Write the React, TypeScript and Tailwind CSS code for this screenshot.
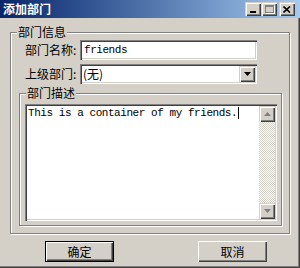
import { ReactNode } from "react";

const cjk = "font-['SimSun','Noto_Sans_CJK_SC',sans-serif]";
const mono = "font-['Liberation_Mono','Noto_Sans_CJK_SC',monospace]";

const sunken =
  "bg-white shadow-[inset_1px_1px_0_#808080,inset_2px_2px_0_#404040,inset_-1px_-1px_0_#fff,inset_-2px_-2px_0_#d4d0c8]";
const raised =
  "bg-[#d4d0c8] shadow-[inset_1px_1px_0_#d4d0c8,inset_2px_2px_0_#fff,inset_-1px_-1px_0_#404040,inset_-2px_-2px_0_#808080]";

function TitleButton({ children }: { children: ReactNode }) {
  return (
    <div className={`w-[16px] h-[14px] flex items-center justify-center ${raised}`}>
      {children}
    </div>
  );
}

function Arrow({ up, gray }: { up?: boolean; gray?: boolean }) {
  return (
    <svg width="7" height="4" viewBox="0 0 7 4" className={up ? "" : "rotate-180"}>
      <path d="M3.5 0 L7 4 L0 4 Z" fill={gray ? "#808080" : "#000"} />
    </svg>
  );
}

function Group({ label, className, children }: { label: string; className: string; children: ReactNode }) {
  return (
    <div className={`relative border border-[#808080] shadow-[inset_1px_1px_0_#fff,1px_1px_0_#fff] ${className}`}>
      <span className={`absolute -top-[8px] left-[6px] px-[1px] bg-[#d4d0c8] text-[12px] leading-[14px] ${cjk}`}>
        {label}
      </span>
      {children}
    </div>
  );
}

export default function App() {
  return (
    <div className="w-[300px] h-[268px] flex flex-col bg-[#d4d0c8] overflow-hidden text-black">
      <div className="h-[18px] shrink-0 flex items-center justify-between bg-linear-to-r from-[#0a246a] to-[#a6caf0] pl-[3px] pr-[5px]">
        <span className={`text-white font-bold text-[12px] leading-[14px] ${cjk}`}>添加部门</span>
        <div className="flex gap-[2px]">
          <div className="flex">
            <TitleButton>
              <div className="w-[6px] h-[2px] bg-black mt-[6px] -ml-[1px]" />
            </TitleButton>
            <TitleButton>
              <div className="w-[9px] h-[8px] border border-[#808080] border-t-2 shadow-[1px_1px_0_#fff]" />
            </TitleButton>
          </div>
          <TitleButton>
            <svg width="8" height="7" viewBox="0 0 8 7">
              <path d="M0.5 0.5 L7 6.5 M7 0.5 L0.5 6.5" stroke="#000" strokeWidth="1.6" />
            </svg>
          </TitleButton>
        </div>
      </div>

      <div className="flex-1 flex flex-col border-r border-b border-[#404040] shadow-[inset_-1px_-1px_0_#808080]">
        <Group label="部门信息" className="mt-[14px] ml-[10px] w-[280px] h-[202px] shrink-0">
          <div className="flex items-center mt-[7px] ml-[14px]">
            <span className={`w-[55px] text-[12px] ${cjk}`}>部门名称:</span>
            <div className={`w-[177px] h-[20px] flex items-center pl-[4px] ${sunken}`}>
              <span className={`text-[11px] tracking-[-0.45px] ${mono}`}>friends</span>
            </div>
          </div>
          <div className="flex items-center mt-[4px] ml-[14px]">
            <span className={`w-[55px] text-[12px] ${cjk}`}>上级部门:</span>
            <div className={`w-[177px] h-[20px] flex items-center justify-between pl-[3px] pr-[2px] ${sunken}`}>
              <span className={`text-[12px] ${cjk}`}>(无)</span>
              <div className={`w-[16px] h-[16px] flex items-center justify-center ${raised}`}>
                <Arrow />
              </div>
            </div>
          </div>
          <Group label="部门描述" className="mt-[9px] ml-[8px] w-[263px] h-[133px]">
            <div className={`mt-[10px] ml-[5px] w-[252px] h-[117px] flex p-[2px] ${sunken}`}>
              <div className={`flex-1 pl-[1px] pt-[1px] text-[11px] leading-[13px] ${mono}`}>
                <span className="tracking-[-0.45px]">This is a container of my friends.</span>
                <span className="inline-block w-[1px] h-[12px] bg-black align-top ml-[1px]" />
              </div>
              <div className="w-[16px] flex flex-col bg-[repeating-conic-gradient(#d4d0c8_0_25%,#fff_0_50%)] bg-size-[2px_2px]">
                <div className={`h-[16px] flex items-center justify-center ${raised}`}>
                  <Arrow up gray />
                </div>
                <div className="flex-1" />
                <div className={`h-[16px] flex items-center justify-center ${raised}`}>
                  <Arrow gray />
                </div>
              </div>
            </div>
          </Group>
        </Group>

        <div className="flex mt-[7px]">
          <div className="ml-[45px] w-[69px] h-[21px] border border-black">
            <div className={`w-full h-full flex items-center justify-center text-[12px] ${cjk} bg-[#d4d0c8] shadow-[inset_1px_1px_0_#fff,inset_-1px_-1px_0_#404040,inset_-2px_-2px_0_#808080]`}>
              确定
            </div>
          </div>
          <div className={`ml-[84px] w-[69px] h-[21px] flex items-center justify-center text-[12px] ${cjk} bg-[#d4d0c8] shadow-[inset_1px_1px_0_#fff,inset_-1px_-1px_0_#404040,inset_-2px_-2px_0_#808080]`}>
            取消
          </div>
        </div>
      </div>
    </div>
  );
}
